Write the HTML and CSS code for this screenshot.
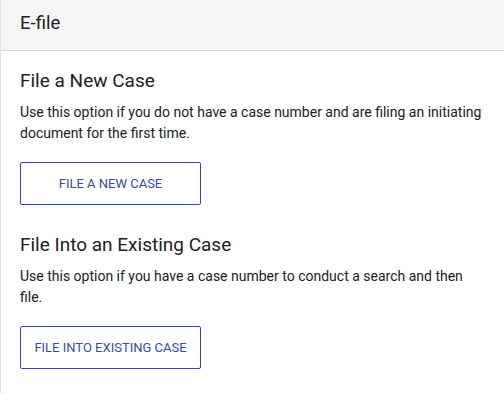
FILE: index.html
```html
<!DOCTYPE html>
<html>
<head>
    <title>E-file</title>
    <link rel="stylesheet" href="styles.css">
</head>
<body>
    <div class="card">
        <div class="card-header">E-file</div>
        <div class="card-body">
            <div class="option">
                <h2>File a New Case</h2>
                <p>Use this option if you do not have a case number and are filing an initiating document for the first time.</p>
                <button class="outline-button">File a New Case</button>
            </div>
            <div class="option">
                <h2>File Into an Existing Case</h2>
                <p>Use this option if you have a case number to conduct a search and then file.</p>
                <button class="outline-button">File Into Existing Case</button>
            </div>
        </div>
    </div>
</body>
</html>
```

FILE: styles.css
```css
body {
    font-family: Roboto, "Liberation Sans", sans-serif;
    margin: 0;
    color: #212121;
    background: #fff;
    overflow: hidden;
}
.card {
    border-left: 1px solid #e0e0e0;
    min-height: 393px;
}
.card-header {
    background-color: #f5f5f5;
    border-bottom: 1px solid #d8d8d8;
    height: 50px;
    line-height: 46px;
    padding: 0 19px;
    font-size: 18.5px;
}
.card-body {
    padding: 18px 19px 0;
}
.option {
    margin-bottom: 28px;
}
.option h2 {
    font-size: 19px;
    font-weight: 400;
    line-height: 24px;
    margin: 0 0 9px;
}
.option p {
    font-size: 14px;
    line-height: 21px;
    margin: 0 0 18px;
    max-width: 466px;
}
.outline-button {
    width: 181px;
    height: 43px;
    background: #fff;
    border: 1px solid #3a4b9f;
    border-radius: 2px;
    color: #3a4b9f;
    font-family: Roboto, "Liberation Sans", sans-serif;
    font-size: 13px;
    text-transform: uppercase;
    cursor: pointer;
}
```
